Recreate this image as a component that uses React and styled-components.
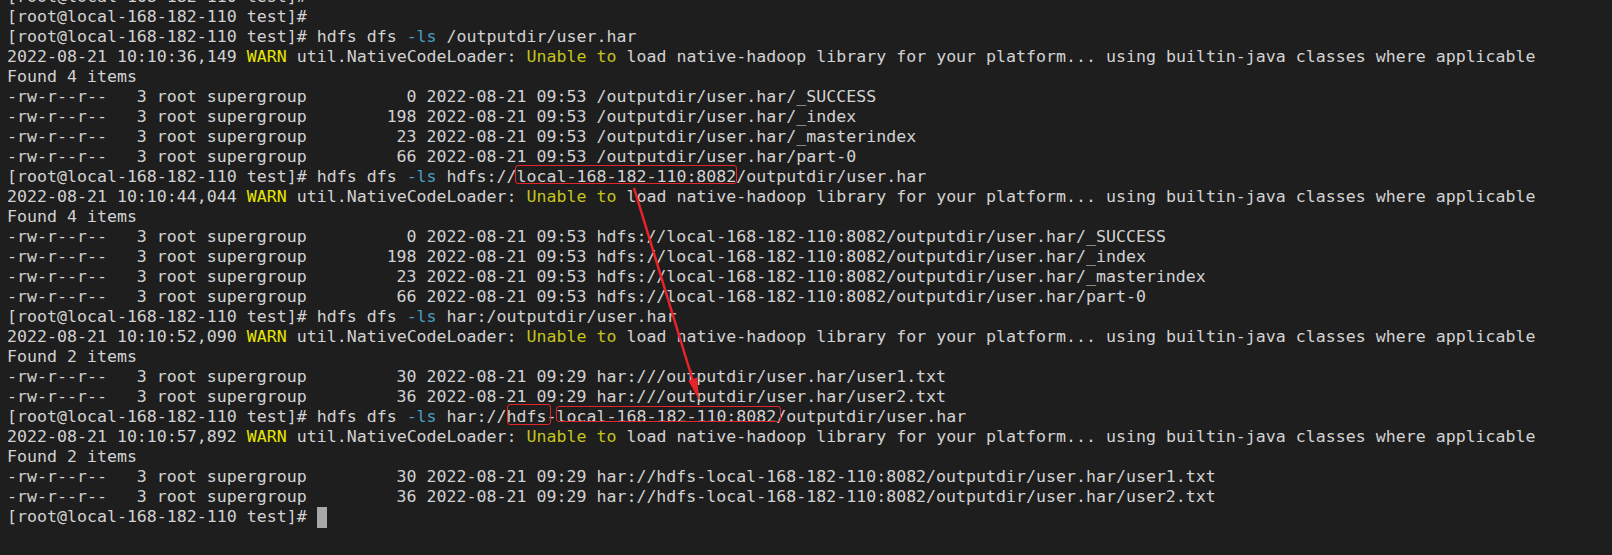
import styled, { createGlobalStyle } from "styled-components";

const GlobalStyle = createGlobalStyle`
  html, body {
    margin: 0;
    padding: 0;
    background: #1e1e1e;
  }
`;

const PROMPT = "[root@local-168-182-110 test]#";

const listing = (size, time, path) =>
  `-rw-r--r--   3 root supergroup ${String(size).padStart(10, " ")} 2022-08-21 ${time} ${path}`;

function Warn({ time }) {
  return (
    <Line>
      {`2022-08-21 ${time} `}
      <Level>WARN</Level>
      {" util.NativeCodeLoader: "}
      <Hint>Unable to</Hint>
      {" load native-hadoop library for your platform... using builtin-java classes where applicable"}
    </Line>
  );
}

function Command({ children }) {
  return (
    <Line>
      {PROMPT} hdfs dfs <Flag>-ls</Flag> {children}
    </Line>
  );
}

export default function App() {
  return (
    <>
      <GlobalStyle />
      <Terminal>
        <Screen>
          <Line>{PROMPT}</Line>
          <Line>{PROMPT}</Line>
          <Command>/outputdir/user.har</Command>
          <Warn time="10:10:36,149" />
          <Line>Found 4 items</Line>
          <Line>{listing(0, "09:53", "/outputdir/user.har/_SUCCESS")}</Line>
          <Line>{listing(198, "09:53", "/outputdir/user.har/_index")}</Line>
          <Line>{listing(23, "09:53", "/outputdir/user.har/_masterindex")}</Line>
          <Line>{listing(66, "09:53", "/outputdir/user.har/part-0")}</Line>
          <Command>
            hdfs://
            <Mark $t={-2} $r={1} $b={2} $l={-2}>local-168-182-110:8082</Mark>
            /outputdir/user.har
          </Command>
          <Warn time="10:10:44,044" />
          <Line>Found 4 items</Line>
          <Line>{listing(0, "09:53", "hdfs://local-168-182-110:8082/outputdir/user.har/_SUCCESS")}</Line>
          <Line>{listing(198, "09:53", "hdfs://local-168-182-110:8082/outputdir/user.har/_index")}</Line>
          <Line>{listing(23, "09:53", "hdfs://local-168-182-110:8082/outputdir/user.har/_masterindex")}</Line>
          <Line>{listing(66, "09:53", "hdfs://local-168-182-110:8082/outputdir/user.har/part-0")}</Line>
          <Command>har:/outputdir/user.har</Command>
          <Warn time="10:10:52,090" />
          <Line>Found 2 items</Line>
          <Line>{listing(30, "09:29", "har:///outputdir/user.har/user1.txt")}</Line>
          <Line>{listing(36, "09:29", "har:///outputdir/user.har/user2.txt")}</Line>
          <Command>
            har://
            <Mark $t={-3} $r={4} $b={1} $l={0}>hdfs</Mark>
            -
            <Mark $t={-1} $r={5} $b={4} $l={-1}>local-168-182-110:8082</Mark>
            /outputdir/user.har
          </Command>
          <Warn time="10:10:57,892" />
          <Line>Found 2 items</Line>
          <Line>{listing(30, "09:29", "har://hdfs-local-168-182-110:8082/outputdir/user.har/user1.txt")}</Line>
          <Line>{listing(36, "09:29", "har://hdfs-local-168-182-110:8082/outputdir/user.har/user2.txt")}</Line>
          <Line>
            {PROMPT} <Cursor />
          </Line>
        </Screen>

        {/* red annotation arrow drawn over the output */}
        <Arrow width="1612" height="555" viewBox="0 0 1612 555">
          <line x1="634" y1="188" x2="693" y2="381" stroke="#e8232a" strokeWidth="2.5" />
          <polygon points="697.2,377.6 688.2,380.6 699,400" fill="#e8232a" />
        </Arrow>
      </Terminal>
    </>
  );
}

const Terminal = styled.div`
  position: relative;
  width: 1612px;
  height: 555px;
  overflow: hidden;
  background: #1e1e1e;
  font-family: "DejaVu Sans Mono", "Liberation Mono", monospace;
  font-size: 16.6px;
  color: #d2d2d2;
`;

const Screen = styled.div`
  display: flex;
  flex-direction: column;
  margin-top: -13px;
  padding-left: 7px;
`;

const Line = styled.div`
  height: 20px;
  line-height: 20px;
  white-space: pre;
`;

const Level = styled.span`
  color: #e6e600;
`;

const Hint = styled.span`
  color: #c4c41c;
`;

const Flag = styled.span`
  color: #4b9ec3;
`;

const Mark = styled.span`
  position: relative;

  &::after {
    content: "";
    position: absolute;
    top: ${(p) => p.$t}px;
    right: ${(p) => -p.$r}px;
    bottom: ${(p) => p.$b}px;
    left: ${(p) => p.$l}px;
    border: 1.5px solid #e3242b;
    border-radius: 3px;
  }
`;

const Cursor = styled.span`
  display: inline-block;
  width: 10px;
  height: 21px;
  vertical-align: -6px;
  background: #a8a8a8;
`;

const Arrow = styled.svg`
  position: absolute;
  top: 0;
  left: 0;
  pointer-events: none;
`;
